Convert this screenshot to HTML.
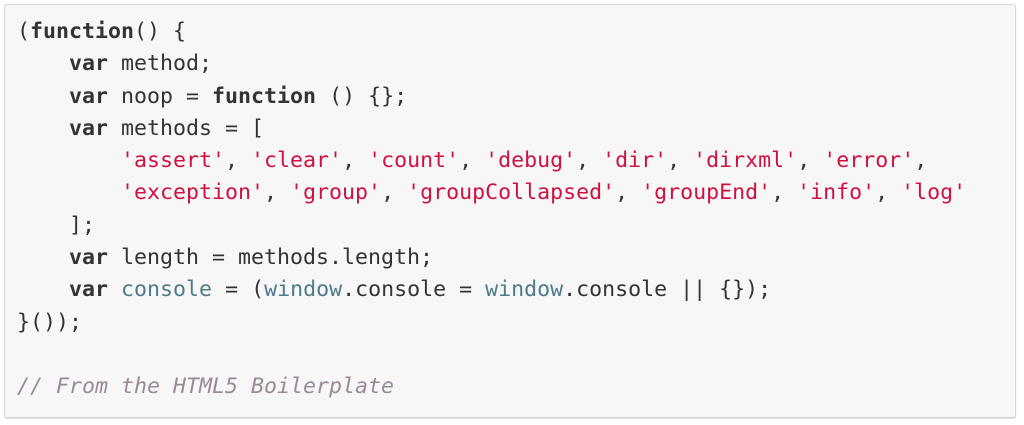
<!DOCTYPE html>
<html><head><meta charset="utf-8"><style>
html,body{margin:0;padding:0;background:#fff;width:1024px;height:425px;overflow:hidden}
.box{position:absolute;left:4px;top:4px;width:1010px;height:412px;background:#f8f7f8;border:1px solid #d6d4d6;border-radius:3px;box-shadow:0 1px 1px #e0dde0}
pre{margin:0;position:absolute;left:12px;top:11px;font-family:"DejaVu Sans Mono","Liberation Mono",monospace;font-size:21.6px;line-height:32.3px;color:#333}
b{font-weight:bold;color:#333}
.s{color:#d01040}
.v{color:#4d7b8a}
.c{color:#998a98;font-style:italic}
</style></head><body>
<div class="box"><pre>(<b>function</b>() {
    <b>var</b> method;
    <b>var</b> noop = <b>function</b> () {};
    <b>var</b> methods = [
        <span class="s">'assert'</span>, <span class="s">'clear'</span>, <span class="s">'count'</span>, <span class="s">'debug'</span>, <span class="s">'dir'</span>, <span class="s">'dirxml'</span>, <span class="s">'error'</span>,
        <span class="s">'exception'</span>, <span class="s">'group'</span>, <span class="s">'groupCollapsed'</span>, <span class="s">'groupEnd'</span>, <span class="s">'info'</span>, <span class="s">'log'</span>
    ];
    <b>var</b> length = methods.length;
    <b>var</b> <span class="v">console</span> = (<span class="v">window</span>.console = <span class="v">window</span>.console || {});
}());

<span class="c">// From the HTML5 Boilerplate</span></pre></div>
</body></html>
